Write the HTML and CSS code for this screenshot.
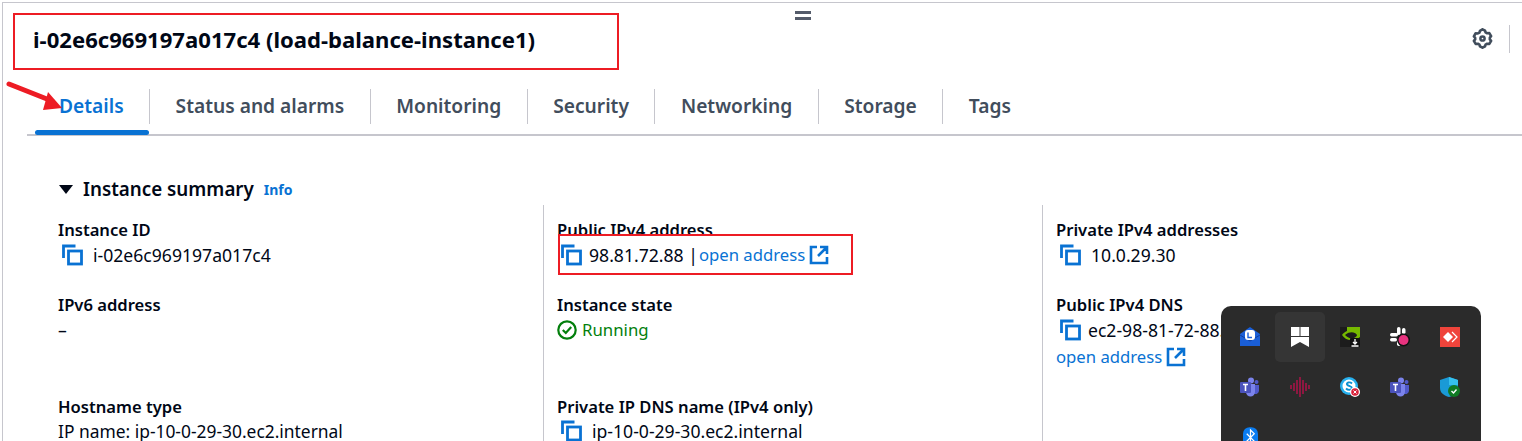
FILE: index.html
```html
<!DOCTYPE html>
<html lang="en">
<head>
<meta charset="utf-8">
<title>Instance details</title>
<link rel="stylesheet" href="styles.css">
</head>
<body>
<svg width="0" height="0" class="defs">
  <symbol id="copy" viewBox="0 0 22 22"><path d="M1.500 14V2h12" fill="none" stroke="#0972d3" stroke-width="2.800"/><rect x="6.500" y="7" width="13" height="13" fill="none" stroke="#0972d3" stroke-width="2.800"/></symbol>
  <symbol id="ext" viewBox="0 0 20 20"><path d="M8 2H2v16h16v-6M11 2h7v7M18 2l-9 9" fill="none" stroke="#0972d3" stroke-width="2.600"/></symbol>
  <symbol id="teams" viewBox="0 0 20 20"><circle cx="11" cy="3.500" r="3" fill="#7b83eb"/><circle cx="16.500" cy="5" r="2" fill="#5059c9"/><path d="M13 8h6v6a3.500 3.500 0 0 1-6 2z" fill="#5059c9"/><path d="M6 7h9v8a4.500 4.500 0 0 1-9 0z" fill="#7b83eb"/><rect x="0" y="5" width="11" height="11" rx="1" fill="#4b53bc"/><path d="M3 7.500h5M5.500 7.500v6.500" stroke="#fff" stroke-width="1.600" fill="none"/></symbol>
</svg>
<div class="page">
  <header class="head">
    <h1 class="title">i-02e6c969197a017c4 (load-balance-instance1)</h1>
    <div class="head-tools">
      <svg class="gear" viewBox="0 0 20 20" width="21" height="21"><path d="M10 1.200l2.400 1.400.5 1.600 1.500.8 2.100-.2 1.700 2.900-1.200 1.400v1.800l1.200 1.400-1.700 2.900-2.100-.2-1.500.8-.5 1.600-2.400 1.400-2.400-1.400-.5-1.600-1.500-.8-2.100.2-1.700-2.900 1.200-1.400V9.300L1.800 7.900l1.700-2.900 2.100.2 1.500-.8.500-1.600z" fill="none" stroke="#414d5c" stroke-width="2.500" stroke-linejoin="round"/><circle cx="10" cy="10" r="2" fill="none" stroke="#414d5c" stroke-width="2.400"/></svg>
      <span class="tool-sep"></span>
    </div>
  </header>
  <nav class="tabs">
    <a class="tab active">Details</a>
    <a class="tab">Status and alarms</a>
    <a class="tab">Monitoring</a>
    <a class="tab">Security</a>
    <a class="tab">Networking</a>
    <a class="tab">Storage</a>
    <a class="tab last">Tags</a>
  </nav>
  <section class="summary">
    <h2 class="summary-title"><span class="caret"></span>Instance summary<a class="info">Info</a></h2>
    <div class="cols">
      <div class="col">
        <div class="field"><div class="label">Instance ID</div><div class="value"><svg class="copy"><use href="#copy"/></svg>i-02e6c969197a017c4</div></div>
        <div class="field"><div class="label">IPv6 address</div><div class="value">–</div></div>
        <div class="field tall"><div class="label">Hostname type</div><div class="value host">IP name: ip-10-0-29-30.ec2.internal</div></div>
      </div>
      <div class="col">
        <div class="field"><div class="label">Public IPv4 address</div><div class="value"><svg class="copy tight"><use href="#copy"/></svg>98.81.72.88 | <a class="link">open address</a><svg class="ext"><use href="#ext"/></svg></div></div>
        <div class="field"><div class="label">Instance state</div><div class="value running"><svg class="ok" viewBox="0 0 20 20" width="20" height="20"><circle cx="10" cy="10" r="8.700" fill="none" stroke="#037f0c" stroke-width="2.200"/><path d="M5.800 10l3 3 5.400-6" fill="none" stroke="#037f0c" stroke-width="2.200"/></svg>Running</div></div>
        <div class="field tall"><div class="label">Private IP DNS name (IPv4 only)</div><div class="value"><svg class="copy"><use href="#copy"/></svg>ip-10-0-29-30.ec2.internal</div></div>
      </div>
      <div class="col">
        <div class="field"><div class="label">Private IPv4 addresses</div><div class="value"><svg class="copy"><use href="#copy"/></svg>10.0.29.30</div></div>
        <div class="field"><div class="label">Public IPv4 DNS</div><div class="value"><svg class="copy tight"><use href="#copy"/></svg>ec2-98-81-72-88.compute-1.amazonaws.com</div><div class="value second"><a class="link">open address</a><svg class="ext"><use href="#ext"/></svg></div></div>
      </div>
    </div>
  </section>
</div>

<div class="mark mark-title"></div>
<div class="mark mark-ip"></div>
<svg class="arrow" viewBox="0 0 70 40" width="70" height="40"><path d="M3 3L46 20" stroke="#ed1c24" stroke-width="5" stroke-linecap="round"/><path d="M42 11L56 27 37 29z" fill="#ed1c24"/></svg>
<div class="grip"></div>

<aside class="tray">
  <div class="cell"><svg viewBox="0 0 20 20" width="20" height="20"><path d="M0 7L10 0l10 7v12H0z" fill="#1a5fd8"/><path d="M0 8l10 6 10-6" fill="none" stroke="#0f3f9e"/><rect x="5" y="3" width="10" height="10" rx="3" fill="#fff"/><path d="M8 5.500v5h4" fill="none" stroke="#1a5fd8" stroke-width="1.400"/></svg></div>
  <div class="cell hover"><svg viewBox="0 0 20 20" width="20" height="20"><path d="M1 0h8.500v9H1zM10.500 0H19v9h-8.500zM1 10h18v10l-9-5-9 5z" fill="#fff"/></svg></div>
  <div class="cell"><svg viewBox="0 0 20 20" width="20" height="20"><rect width="20" height="20" fill="#1c1c1c"/><path d="M7 0h13v10l-3 2-3-1c2-1 3-2 3-3-2-3-7-4-12 0 3 3 6 4 9 3l-3 2C7 13 4 11 2 8c1-2 3-3 5-4z" fill="#76b900"/><rect x="10" y="11" width="10" height="9" rx="1" fill="#111"/><path d="M15 12v4M13 15l2 2 2-2M11.500 19h7" stroke="#fff" stroke-width="1.300" fill="none"/></svg></div>
  <div class="cell"><svg viewBox="0 0 20 20" width="20" height="20"><rect x="0" y="6" width="8" height="3.500" rx="1.700" fill="#fff"/><rect x="7" y="0" width="3.500" height="8" rx="1.700" fill="#fff"/><rect x="0" y="11" width="7" height="3.500" rx="1.700" fill="#fff"/><rect x="12" y="1" width="3.500" height="6" rx="1.700" fill="#fff"/><rect x="7" y="11" width="3.500" height="8" rx="1.700" fill="#fff"/><circle cx="13.500" cy="13" r="6.500" fill="#111"/><circle cx="13.500" cy="13" r="5" fill="#e8337f"/></svg></div>
  <div class="cell"><svg viewBox="0 0 20 20" width="20" height="20"><rect width="20" height="20" fill="#ef443b"/><path d="M8 5l5 5-5 5-5-5z" fill="#fff"/><path d="M12 5l5 5-5 5" fill="none" stroke="#fff" stroke-width="1.200"/></svg></div>
  <div class="cell"><svg width="20" height="20"><use href="#teams"/></svg></div>
  <div class="cell"><svg viewBox="0 0 20 20" width="20" height="20"><path d="M1 8v4M4 6v8M7 3v14M10 0v20M13 3v14M16 6v8M19 8v4" stroke="#b0134a" stroke-width="1.500"/></svg></div>
  <div class="cell"><svg viewBox="0 0 20 20" width="20" height="20"><circle cx="9" cy="9" r="9" fill="#27b1ef"/><circle cx="9" cy="9" r="6.500" fill="#fff"/><path d="M12 6.500C10 4.500 6 5.500 7 7.500s5 1.500 5 3.500-4 2.500-6 .5" fill="none" stroke="#0a8fd0" stroke-width="1.800"/><circle cx="15" cy="15" r="5" fill="#fff"/><circle cx="15" cy="15" r="3.800" fill="#d9233b"/><path d="M13.500 13.500l3 3M16.500 13.500l-3 3" stroke="#fff"/></svg></div>
  <div class="cell"><svg width="20" height="20"><use href="#teams"/></svg></div>
  <div class="cell"><svg viewBox="0 0 20 20" width="20" height="20"><path d="M9 0l9 3v8c0 5-4 7.500-9 9-5-1.500-9-4-9-9V3z" fill="#1a9ad6"/><path d="M9 0l9 3v5H9z" fill="#35c1ee"/><circle cx="14" cy="14" r="6" fill="#0f7b24"/><path d="M11.500 14l2 2 3-3.500" fill="none" stroke="#fff" stroke-width="1.400"/></svg></div>
  <div class="cell"><svg viewBox="0 0 16 22" width="15" height="21"><rect width="16" height="22" rx="7" fill="#0a7cf0"/><path d="M4 7l8 8-4 4V3l4 4-8 8" fill="none" stroke="#fff" stroke-width="1.300"/></svg></div>
</aside>
</body>
</html>
```
FILE: styles.css
```css
* { box-sizing: border-box; }
html, body { margin: 0; height: 441px; overflow: hidden; background: #fff; }
body { font-family: "Noto Sans", "Open Sans", sans-serif; color: #000716; position: relative; }
.defs { position: absolute; }
.page { margin: 2px 0 0 2px; height: 439px; overflow: hidden; border-left: 1px solid #c6c6cd; border-top: 1px solid #c6c6cd; }

.head { display: flex; justify-content: space-between; align-items: center; height: 73px; padding: 0 12px 2px 30px; }
.title { margin: 0; font-size: 22.100px; line-height: 28px; font-weight: 700; color: #000716; }
.head-tools { display: flex; align-items: center; gap: 16px; }
.gear { display: block; }
.tool-sep { width: 1px; height: 28px; background: #c6c6cd; }

.tabs { display: flex; height: 60px; margin-left: 24px; border-bottom: 2px solid #c6c6cd; padding-top: 13px; position: relative; }
.tab { position: relative; font-size: 19.200px; line-height: 33px; height: 35px; padding: 0 25.500px; font-weight: 600; color: #414d5c; border-right: 1px solid #c6c6cd; white-space: nowrap; }
.tab.last { border-right: 0; }
.tab.active { color: #0972d3; padding-left: 24px; margin-left: 8px; }
.tab.active::after { content: ""; position: absolute; left: 0; right: 0; top: 41px; height: 5px; border-radius: 3px; background: #0972d3; }

.summary { padding: 40px 0 0 41px; }
.summary-title { display: flex; align-items: center; margin: 0 0 3px 15px; font-size: 18.800px; line-height: 26px; font-weight: 600; color: #000716; }
.caret { width: 0; height: 0; margin-right: 10px; border-left: 7px solid transparent; border-right: 7px solid transparent; border-top: 9px solid #000716; }
.info { margin-left: 10px; font-size: 14px; font-weight: 700; color: #0972d3; position: relative; top: 1px; }

.cols { display: grid; grid-template-columns: 499px 499px 1fr; height: 233px; }
.col { padding-left: 14px; }
.col + .col { border-left: 1px solid #c6c6cd; padding-left: 13px; }
.field { height: 75px; padding-top: 12px; }
.field.tall { height: auto; padding-top: 39px; }
.label { font-size: 16.600px; line-height: 25px; font-weight: 600; color: #000716; white-space: nowrap; }
.value { display: flex; align-items: center; font-size: 17.600px; line-height: 26px; white-space: nowrap; color: #000716; }
.value.second { margin-top: 1px; }
.tall .value { height: 20px; line-height: 20px; margin-top: 2px; }
.value.host { font-size: 17.400px; }
.copy { width: 22px; height: 22px; margin: 0 9px 0 4px; flex: none; }
.copy.tight { margin-right: 6px; }
.ext { width: 20px; height: 20px; margin-left: 4px; flex: none; }
.link { font-size: 16.700px; color: #0972d3; margin-left: 1px; }
.value > .link:first-child { margin-left: 0; }
.running { color: #037f0c; font-size: 16.800px; }
.ok { margin-right: 5px; }

.mark { position: absolute; border: 2px solid #ed1c24; }
.mark-title { left: 13px; top: 13px; width: 606px; height: 57px; }
.mark-ip { left: 558px; top: 234px; width: 295px; height: 41px; }
.arrow { position: absolute; left: 6px; top: 81px; }
.grip { position: absolute; left: 795px; top: 11px; width: 16px; height: 9px; border-top: 3px solid #545b6a; border-bottom: 3px solid #545b6a; }

.tray { position: absolute; left: 1221px; top: 306px; width: 260px; height: 135px; overflow: hidden; padding: 6px 4px; background: #2b2b2b; border-radius: 10px 10px 0 0; display: grid; grid-template-columns: repeat(5, 50px); grid-auto-rows: 50px; }
.cell { display: flex; align-items: center; justify-content: center; border-radius: 5px; }
.cell.hover { background: #353535; }
```
